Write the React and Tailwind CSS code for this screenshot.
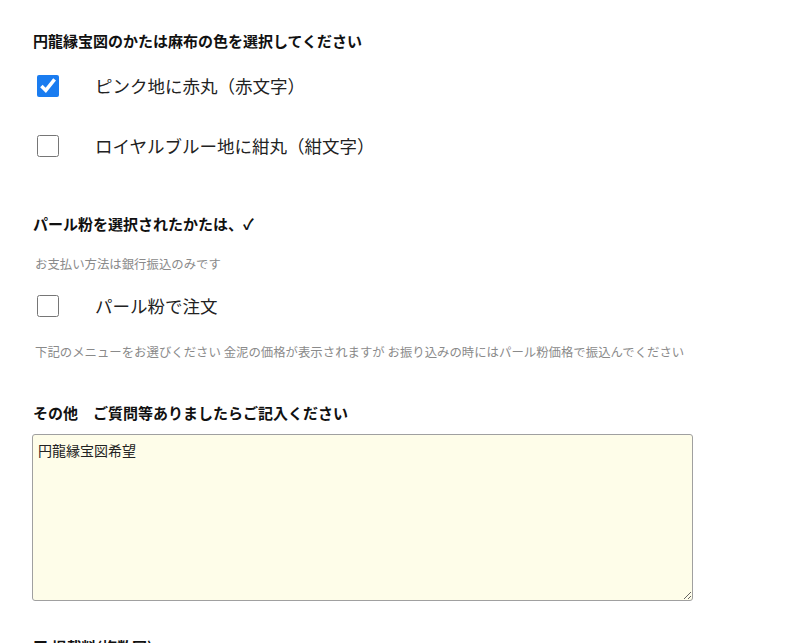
const jp = { fontFamily: '"Noto Sans CJK JP", "Noto Sans", sans-serif' };

const Option = ({ label, checked, className }) => (
  <label className={`flex items-center h-[22px] ${className}`}>
    <input
      type="checkbox"
      defaultChecked={checked}
      className="ml-[5px] w-[22px] h-[22px] m-0 accent-[#1a7cf0]"
    />
    <span className="ml-[36px] text-[17.5px] leading-[22px] text-[#222]">{label}</span>
  </label>
);

export default function App() {
  return (
    <div className="bg-white h-[643px] overflow-hidden pl-[32px] pt-[30px] text-[#111]" style={jp}>
      <h2 className="ml-px text-[15px] leading-[22px] font-bold">
        円龍縁宝図のかたは麻布の色を選択してください
      </h2>
      <Option className="mt-[23px]" label="ピンク地に赤丸（赤文字）" checked />
      <Option className="mt-[38px]" label="ロイヤルブルー地に紺丸（紺文字）" />

      <h2 className="mt-[56px] ml-px text-[15px] leading-[22px] font-bold">
        パール粉を選択されたかたは、✓
      </h2>
      <p className="mt-[20px] ml-[3px] text-[12.4px] leading-[18px] text-[#8a8a8a]">
        お支払い方法は銀行振込のみです
      </p>
      <Option className="mt-[22px]" label="パール粉で注文" />
      <p className="mt-[26px] ml-[3px] text-[12.4px] leading-[18px] text-[#8a8a8a]">
        下記のメニューをお選びください 金泥の価格が表示されますが お振り込みの時にはパール粉価格で振込んでください
      </p>

      <h2 className="mt-[41px] ml-px text-[15px] leading-[22px] font-bold">
        その他　ご質問等ありましたらご記入ください
      </h2>
      <textarea
        defaultValue="円龍縁宝図希望"
        className="block mt-[10px] w-[661px] h-[167px] bg-[#fefde9] border border-[#a0a0a0] rounded-[3px] px-[5px] py-[5px] text-[14px] leading-[20px] text-[#222] outline-none"
        style={jp}
      />

      <h2 className="mt-[35px] ml-px text-[15px] leading-[22px] font-bold">
        ■ 掲載料(複数回)
      </h2>
    </div>
  );
}
